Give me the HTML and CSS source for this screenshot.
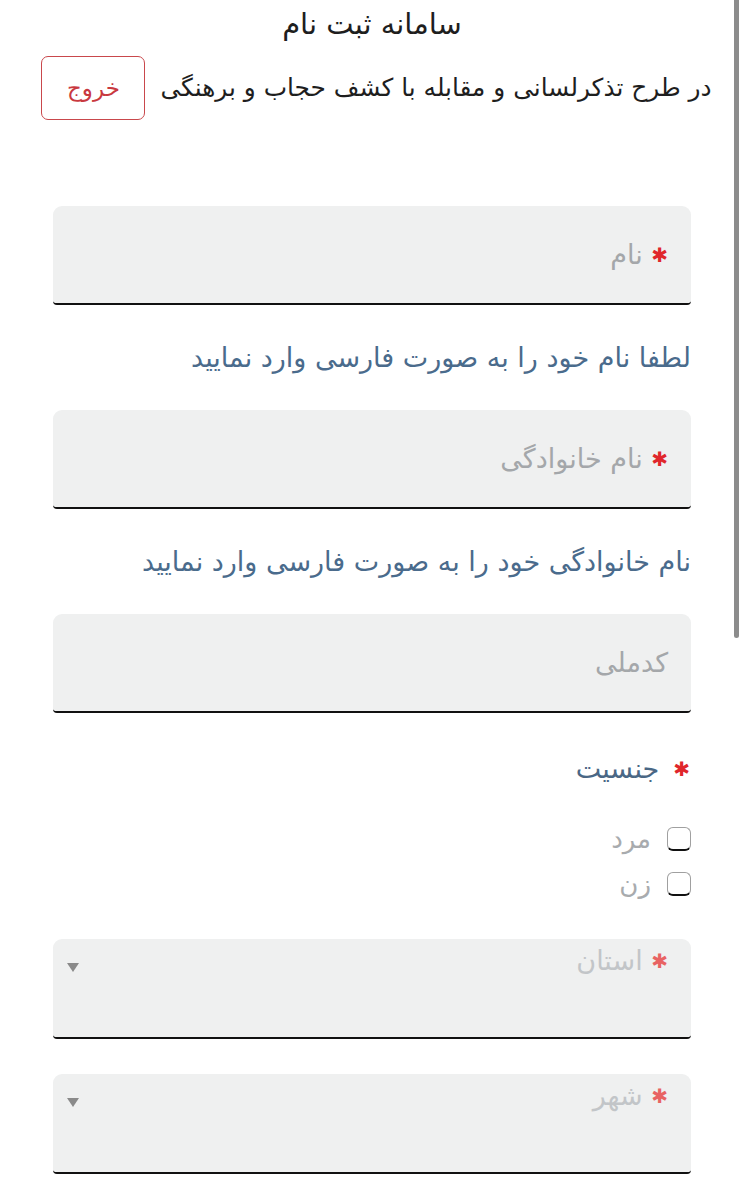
FILE: index.html
```html
<!DOCTYPE html>
<html lang="fa" dir="rtl">
<head>
<meta charset="utf-8">
<title>سامانه ثبت نام</title>
<link rel="stylesheet" href="styles.css">
</head>
<body>
<div class="page">
  <header class="head">
    <h1 class="title">سامانه ثبت نام</h1>
    <div class="sub">
      <span class="sub-text">در طرح تذکرلسانی و مقابله با کشف حجاب و برهنگی</span>
      <button class="exit" type="button">خروج</button>
    </div>
  </header>

  <form class="form">
    <div class="field">
      <span class="label"><span class="req">✱</span> نام</span>
    </div>
    <p class="helper">لطفا نام خود را به صورت فارسی وارد نمایید</p>

    <div class="field">
      <span class="label"><span class="req">✱</span> نام خانوادگی</span>
    </div>
    <p class="helper">نام خانوادگی خود را به صورت فارسی وارد نمایید</p>

    <div class="field">
      <span class="label">کدملی</span>
    </div>

    <div class="gender">
      <span class="req">✱</span>
      <span class="gender-text">جنسیت</span>
    </div>
    <div class="options">
      <label class="opt"><span class="box"></span><span class="opt-text">مرد</span></label>
      <label class="opt"><span class="box"></span><span class="opt-text">زن</span></label>
    </div>

    <div class="select">
      <span class="sel-label"><span class="req light">✱</span> استان</span>
      <span class="arrow"></span>
    </div>
    <div class="select second">
      <span class="sel-label"><span class="req light">✱</span> شهر</span>
      <span class="arrow"></span>
    </div>
  </form>
</div>
<div class="scroll"></div>
</body>
</html>
```
FILE: styles.css
```css
html, body {
  margin: 0;
  padding: 0;
  background: #ffffff;
}
body {
  font-family: "DejaVu Sans", "Noto Sans", sans-serif;
  color: #222222;
  direction: rtl;
}
.page {
  width: 744px;
  box-sizing: border-box;
}
.head {
  display: flex;
  flex-direction: column;
  align-items: center;
}
.title {
  margin: 6px 0 0;
  font-size: 29px;
  font-weight: normal;
  line-height: 36px;
  height: 36px;
  color: #1e1e1e;
}
.sub {
  margin-top: 14px;
  display: flex;
  align-items: center;
  justify-content: center;
  gap: 15px;
  width: 100%;
  padding-left: 9px;
  box-sizing: border-box;
}
.sub-text {
  font-size: 24.8px;
  line-height: 34px;
  color: #1e1e1e;
}
.exit {
  width: 104px;
  height: 64px;
  border: 1.5px solid #c9484c;
  border-radius: 7px;
  background: #fff;
  color: #c9393f;
  font-family: "DejaVu Sans", sans-serif;
  font-size: 23px;
  padding: 0;
}
.form {
  margin: 86px 53px 0;
  display: flex;
  flex-direction: column;
}
.field, .select {
  height: 97px;
  background: #eff0f0;
  border-radius: 9px 9px 4px 4px;
  border-bottom: 2px solid #111111;
  display: flex;
  align-items: center;
  padding: 0 23px;
}
.label {
  font-size: 27px;
  line-height: 34px;
  color: #a4a7aa;
}
.req {
  color: #e0262b;
  font-size: 20px;
  font-weight: bold;
  vertical-align: 2px;
}
.req.light {
  color: #e86363;
}
.helper {
  margin: 38px 0 37px;
  font-size: 27px;
  line-height: 30px;
  color: #4a6b8c;
}
.gender {
  margin-top: 41px;
  height: 30px;
  display: flex;
  align-items: center;
  gap: 14px;
  padding-right: 1px;
}
.gender-text {
  font-size: 27px;
  line-height: 30px;
  color: #4a6785;
}
.options {
  margin-top: 32px;
  display: flex;
  flex-direction: column;
}
.opt {
  height: 45px;
  display: flex;
  align-items: center;
  gap: 16px;
}
.box {
  width: 22px;
  height: 21px;
  border: 1.5px solid #a0a0a0;
  border-bottom: 2.5px solid #111;
  border-radius: 6px;
  background: #fff;
}
.opt-text {
  font-size: 26px;
  line-height: 30px;
  color: #a8abae;
}
.select {
  margin-top: 33px;
  align-items: flex-start;
  justify-content: space-between;
  padding: 6px 23px 0 14px;
  box-sizing: content-box;
  height: 92px;
}
.select.second {
  margin-top: 35px;
}
.sel-label {
  font-size: 27px;
  color: #c2c5c8;
  line-height: 32px;
}
.arrow {
  margin-top: 18px;
  width: 0;
  height: 0;
  border-left: 6px solid transparent;
  border-right: 6px solid transparent;
  border-top: 9px solid #8a8a8a;
}
.scroll {
  position: fixed;
  top: 0;
  right: 5px;
  width: 5px;
  height: 638px;
  background: #8c8c8c;
  border-radius: 0 0 3px 3px;
}
```
